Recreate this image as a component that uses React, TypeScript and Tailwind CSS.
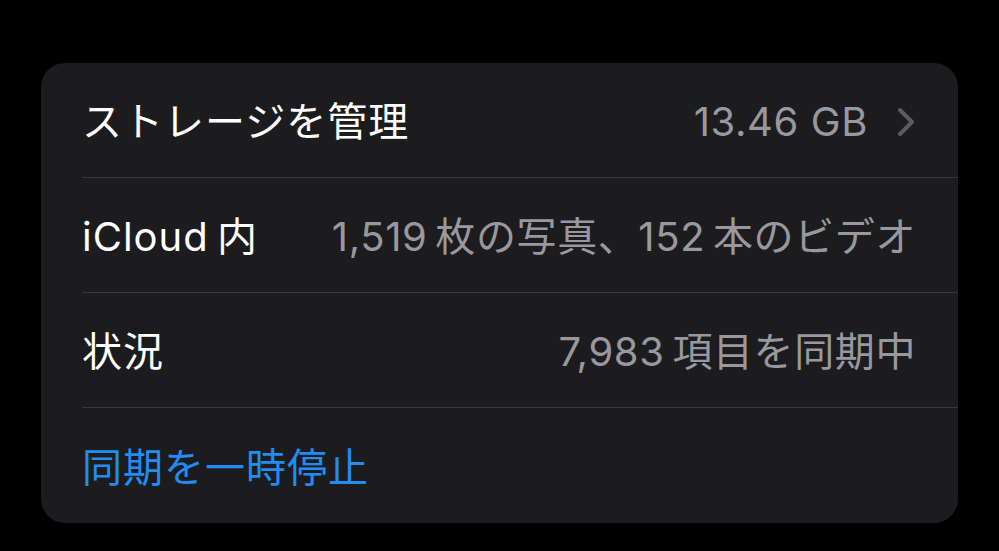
const font = { fontFamily: 'Inter, "Noto Sans CJK JP", sans-serif' }

interface RowProps {
  label: string
  value?: string
  chevron?: boolean
  last?: boolean
}

// iOS puts a little air between latin and kana/kanji, a thin space does the same
const T = '\u2009'

function Chevron() {
  return (
    <svg width="20" height="30" viewBox="0 0 20 30" className="ml-[29px] -mr-[1px] text-[#5b5b60]">
      <polyline
        points="3,3 15,15 3,27"
        fill="none"
        stroke="currentColor"
        strokeWidth="4"
        strokeLinecap="round"
        strokeLinejoin="round"
      />
    </svg>
  )
}

function Row({ label, value, chevron, last }: RowProps) {
  return (
    <div className="pl-[41px]">
      <div
        className={`flex h-[115px] items-center justify-between pr-[42px] pt-[4px] ${
          last ? '' : 'border-b border-[#38383a]'
        }`}
      >
        <span className="text-[40px] leading-none text-white tracking-[1px]">{label}</span>
        <div className="flex items-center">
          <span className="text-[40px] leading-none text-[#98989e] tracking-[0.6px]">{value}</span>
          {chevron && <Chevron />}
        </div>
      </div>
    </div>
  )
}

export default function App() {
  return (
    <div className="min-h-[551px] w-full bg-black pl-[41px] pr-[41px] pt-[63px]" style={font}>
      <div className="w-[917px] overflow-hidden rounded-[24px] bg-[#1c1c1e]">
        <Row label="ストレージを管理" value="13.46 GB" chevron />
        <Row label={`iCloud${T}内`} value={`1,519${T}枚の写真、152${T}本のビデオ`} />
        <Row label="状況" value={`7,983${T}項目を同期中`} />
        <div className="pl-[41px]">
          <div className="flex h-[115px] items-center pt-[4px]">
            <span className="text-[40px] leading-none tracking-[1px] text-[#218cf2]">同期を一時停止</span>
          </div>
        </div>
      </div>
    </div>
  )
}
